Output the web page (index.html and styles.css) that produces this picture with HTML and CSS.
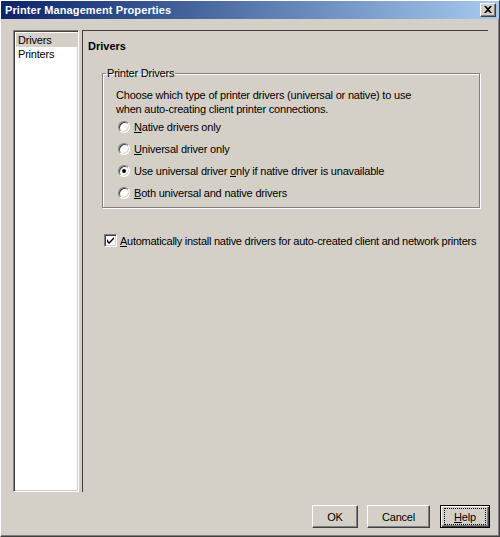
FILE: index.html
```html
<!DOCTYPE html>
<html>
<head>
<meta charset="utf-8">
<title>Printer Management Properties</title>
<link rel="stylesheet" href="styles.css">
</head>
<body>
<div class="window">
  <div class="titlebar">
    <span class="title">Printer Management Properties</span>
    <span class="close-btn">
      <svg width="8" height="7" viewBox="0 0 8 7"><path d="M0 0h2l2 2 2-2h2L5 3.5 8 7H6L4 5 2 7H0l3-3.5z" fill="#000"/></svg>
    </span>
  </div>
  <div class="body">
    <div class="panes">
      <div class="list">
        <div class="item selected">Drivers</div>
        <div class="item">Printers</div>
      </div>
      <div class="page">
        <div class="heading">Drivers</div>
        <fieldset class="group">
          <legend class="group-label">Printer Drivers</legend>
          <div class="group-inner">
            <p class="desc">Choose which type of printer drivers (universal or native) to use<br>when auto-creating client printer connections.</p>
            <div class="radio-row"><span class="radio"></span><span><u>N</u>ative drivers only</span></div>
            <div class="radio-row"><span class="radio"></span><span><u>U</u>niversal driver only</span></div>
            <div class="radio-row"><span class="radio checked"></span><span>Use universal driver <u>o</u>nly if native driver is unavailable</span></div>
            <div class="radio-row"><span class="radio"></span><span><u>B</u>oth universal and native drivers</span></div>
          </div>
        </fieldset>
        <div class="check-row">
          <span class="checkbox"><svg width="7" height="7" viewBox="0 0 7 7"><path d="M0 2v3l2 2 5-5V0L2 5z" fill="#000"/></svg></span>
          <span class="check-label"><u>A</u>utomatically install native drivers for auto-created client and network printers</span>
        </div>
      </div>
    </div>
  </div>
  <div class="footer">
    <button class="btn btn-ok">OK</button>
    <button class="btn btn-cancel">Cancel</button>
    <button class="btn btn-help default"><span class="focus"><u>H</u>elp</span></button>
  </div>
</div>
</body>
</html>
```
FILE: styles.css
```css
* { box-sizing: border-box; }
html, body { margin: 0; padding: 0; }
body {
  width: 500px;
  height: 537px;
  overflow: hidden;
  font-family: "Liberation Sans", Arial, sans-serif;
  font-size: 11px;
  letter-spacing: -0.2px;
  color: #000;
  background: #d4d0c8;
}
.window {
  width: 500px;
  height: 537px;
  display: flex;
  flex-direction: column;
  background: #d4d0c8;
  border: 1px solid;
  border-color: #ffffff #404040 #404040 #ffffff;
  box-shadow: inset -1px -1px #808080;
}
.titlebar {
  height: 18px;
  flex: none;
  display: flex;
  align-items: center;
  justify-content: space-between;
  padding: 0 3px 0 4px;
  background: linear-gradient(to right, #0a246a, #a6caf0);
}
.title {
  color: #fff;
  font-weight: bold;
  letter-spacing: 0.1px;
}
.close-btn {
  width: 16px;
  height: 14px;
  display: flex;
  align-items: center;
  justify-content: center;
  background: #d4d0c8;
  border: 1px solid;
  border-color: #ffffff #404040 #404040 #ffffff;
  box-shadow: inset -1px -1px #808080;
  padding: 0 1px 1px 0;
}
.body {
  flex: none;
  padding: 11px 11px 0 12px;
}
.panes {
  display: flex;
  height: 462px;
}
.list {
  width: 66px;
  flex: none;
  background: #fff;
  border: 1px solid;
  border-color: #808080 #ffffff #ffffff #808080;
  box-shadow: inset 1px 1px #404040, inset -1px -1px #d4d0c8;
  padding: 2px 1px 0 2px;
}
.item {
  height: 14px;
  line-height: 14px;
  padding-left: 2px;
}
.item.selected { background: #d4d0c8; }
.page {
  flex: 1;
  margin-left: 3px;
  border-top: 1px solid #404040;
  border-left: 1px solid #404040;
  padding: 9px 8px 0 5px;
}
.heading {
  font-weight: bold;
  line-height: 13px;
  letter-spacing: 0;
}
.group {
  margin: 14px 0 0 14px;
  padding: 0 8px 3px 3px;
  border: 1px solid #808080;
  box-shadow: inset 1px 1px #fff, 1px 1px #fff;
  min-width: 0;
}
.group-label {
  padding: 0 1px;
  line-height: 13px;
}
.group-inner {
  padding-left: 10px;
}
.desc {
  margin: 8px 0 0 0;
  line-height: 14px;
}
.radio-row {
  height: 22px;
  display: flex;
  align-items: center;
  padding-left: 2px;
  gap: 4px;
}
.radio {
  width: 12px;
  height: 12px;
  flex: none;
  border-radius: 50%;
  background: #fff;
  border: 1px solid;
  border-color: #808080 #ffffff #ffffff #808080;
  box-shadow: inset 1px 1px #404040, inset -1px -1px #d4d0c8;
  display: flex;
  align-items: center;
  justify-content: center;
}
.radio.checked::after {
  content: "";
  width: 4px;
  height: 4px;
  border-radius: 50%;
  background: #000;
}
.check-row {
  margin: 26px 0 0 16px;
  display: flex;
  align-items: center;
  gap: 3px;
  height: 13px;
}
.check-label {
  white-space: nowrap;
  letter-spacing: -0.26px;
}
.checkbox {
  width: 13px;
  height: 13px;
  flex: none;
  background: #fff;
  border: 1px solid;
  border-color: #808080 #ffffff #ffffff #808080;
  box-shadow: inset 1px 1px #404040, inset -1px -1px #d4d0c8;
  display: flex;
  align-items: center;
  justify-content: center;
}
.footer {
  flex: none;
  display: flex;
  justify-content: flex-end;
  padding: 13px 9px 0 0;
  gap: 9px;
}
.btn {
  height: 23px;
  font: inherit;
  letter-spacing: -0.2px;
  color: #000;
  background: #d4d0c8;
  border: 1px solid;
  border-color: #ffffff #404040 #404040 #ffffff;
  box-shadow: inset -1px -1px #808080;
  padding: 0;
  display: flex;
  align-items: center;
  justify-content: center;
}
.btn-ok { width: 46px; }
.btn-cancel { width: 63px; }
.btn-help { width: 50px; margin-left: 1px; }
.btn.default {
  border: 1px solid #000;
  box-shadow: inset 1px 1px #fff, inset -1px -1px #404040, inset -2px -2px #808080;
}
.focus {
  display: flex;
  align-items: center;
  justify-content: center;
  width: 40px;
  height: 15px;
  outline: 1px dotted #000;
}
```
